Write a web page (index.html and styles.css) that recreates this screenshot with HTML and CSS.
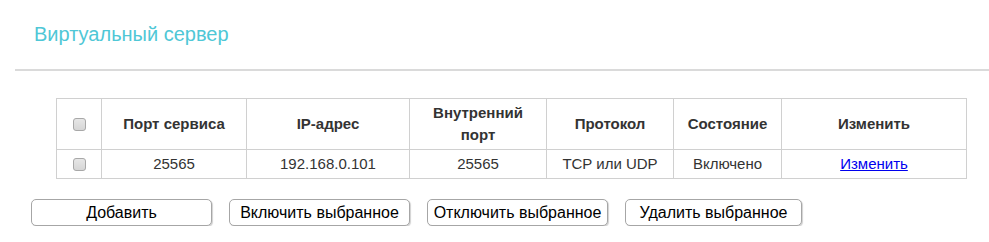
FILE: index.html
```html
<!DOCTYPE html>
<html lang="ru">
<head>
<meta charset="utf-8">
<title>Виртуальный сервер</title>
<link rel="stylesheet" href="styles.css">
</head>
<body>
<div class="page">
  <h1 class="title">Виртуальный сервер</h1>
  <div class="divider"></div>
  <table class="grid">
    <colgroup>
      <col class="c-check"><col class="c-port"><col class="c-ip"><col class="c-inner"><col class="c-proto"><col class="c-state"><col class="c-edit">
    </colgroup>
    <thead>
      <tr>
        <th><input type="checkbox" class="cb"></th>
        <th>Порт сервиса</th>
        <th>IP-адрес</th>
        <th>Внутренний<br>порт</th>
        <th>Протокол</th>
        <th>Состояние</th>
        <th>Изменить</th>
      </tr>
    </thead>
    <tbody>
      <tr>
        <td><input type="checkbox" class="cb"></td>
        <td>25565</td>
        <td>192.168.0.101</td>
        <td>25565</td>
        <td>TCP или UDP</td>
        <td>Включено</td>
        <td><a href="#" class="edit">Изменить</a></td>
      </tr>
    </tbody>
  </table>
  <div class="actions">
    <button class="btn">Добавить</button>
    <button class="btn">Включить выбранное</button>
    <button class="btn">Отключить выбранное</button>
    <button class="btn btn-last">Удалить выбранное</button>
  </div>
</div>
</body>
</html>
```
FILE: styles.css
```css
html, body {
  margin: 0;
  padding: 0;
  background: #fff;
}
body {
  font-family: "Liberation Sans", Arial, sans-serif;
  color: #333;
}
.page {
  width: 989px;
}
.title {
  margin: 21px 0 0 34px;
  font-size: 20px;
  line-height: 26px;
  font-weight: normal;
  color: #4fc7d6;
}
.divider {
  margin: 22px 0 0 15px;
  height: 2px;
  background: #dadada;
}
.grid {
  margin: 27px 0 0 56px;
  width: 910px;
  border-collapse: collapse;
  table-layout: fixed;
}
.c-check { width: 45px; }
.c-port { width: 145px; }
.c-ip { width: 163px; }
.c-inner { width: 137px; }
.c-proto { width: 127px; }
.c-state { width: 108px; }
.c-edit { width: 185px; }
.grid th, .grid td {
  border: 1px solid #d0d0d0;
  text-align: center;
  vertical-align: middle;
  padding: 0;
  font-size: 15px;
  color: #333;
}
.grid th {
  font-weight: bold;
  line-height: 22px;
  height: 50px;
}
.grid td {
  line-height: 20px;
  height: 28px;
}
.cb {
  -webkit-appearance: none;
  appearance: none;
  display: block;
  margin: 0 auto;
  width: 13px;
  height: 13px;
  border: 1px solid #a8a8a8;
  border-radius: 3px;
  background: linear-gradient(#e6e6e6, #d6d6d6);
  box-sizing: border-box;
}
.edit {
  color: #0000ee;
  text-decoration: underline;
}
.actions {
  display: flex;
  gap: 17px;
  margin: 20px 0 0 31px;
}
.btn {
  width: 181px;
  height: 27px;
  padding: 0;
  font-family: "Liberation Sans", Arial, sans-serif;
  font-size: 16px;
  color: #000;
  background: #fff;
  border: 1px solid #a6a6a6;
  border-radius: 5px;
  box-shadow: 1px 1px 1px rgba(0, 0, 0, 0.18);
}
.btn-last {
  width: 177px;
}
```
